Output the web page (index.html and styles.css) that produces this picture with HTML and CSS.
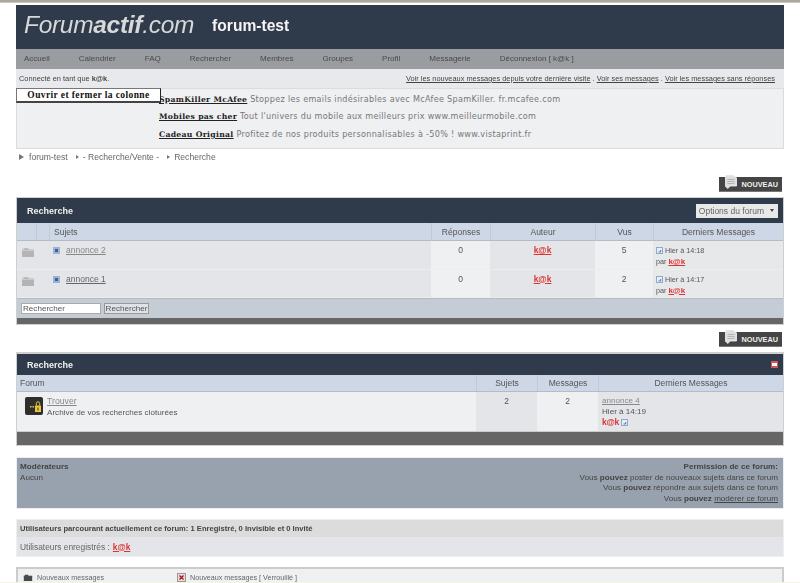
FILE: index.html
```html
<!DOCTYPE html>
<html lang="fr">
<head>
<meta charset="utf-8">
<title>forum-test</title>
<link rel="stylesheet" href="styles.css">
</head>
<body>
<svg class="defs" width="0" height="0">
  <symbol id="folder" viewBox="0 0 12 10"><path d="M0 2.500h1.500V1.200h5V2.500H12V10H0z" fill="#b4b4b4"/><path d="M0 3.500h12" stroke="#d0d0d0" stroke-width=".8"/></symbol>
  <symbol id="note" viewBox="0 0 7 7"><rect x=".5" y=".5" width="6" height="6" fill="#e6eef8" stroke="#8fa8cc"/><path d="M2.500 5h2.200V3" fill="none" stroke="#5a76a0"/></symbol>
  <symbol id="page" viewBox="0 0 12 14"><path d="M.5 0h8l3 3v8H5l-2 2.500-2.500-2z" fill="#dedede" stroke="#f4f4f4" stroke-width=".8"/><path d="M2.500 4.500h7M2.500 6.500h7M2.500 8.500h7" stroke="#b4b4b4"/></symbol>
</svg>
<div class="strip"></div>
<div class="page">
  <header class="banner">
    <span class="logo">Forum<b>actif</b>.com</span>
    <span class="sitename">forum-test</span>
  </header>
  <nav class="nav">
    <a>Accueil</a><a>Calendrier</a><a>FAQ</a><a>Rechercher</a><a>Membres</a><a>Groupes</a><a>Profil</a><a>Messagerie</a><a>Déconnexion [ k@k ]</a>
  </nav>
  <div class="infobar">
    <span>Connecté en tant que <b>k@k</b>.</span>
    <span class="infolinks"><a>Voir les nouveaux messages depuis votre dernière visite</a> . <a>Voir ses messages</a> . <a>Voir les messages sans réponses</a></span>
  </div>
  <div class="ads">
    <button class="toggle">Ouvrir et fermer la colonne</button>
    <p><a>SpamKiller McAfee</a> Stoppez les emails indésirables avec McAfee SpamKiller. fr.mcafee.com</p>
    <p><a>Mobiles pas cher</a> Tout l'univers du mobile aux meilleurs prix www.meilleurmobile.com</p>
    <p><a>Cadeau Original</a> Profitez de nos produits personnalisables à -50% ! www.vistaprint.fr</p>
  </div>
  <div class="crumbs"><span class="tri big"></span>forum-test<span class="tri"></span>- Recherche/Vente -<span class="tri"></span>Recherche</div>

  <div class="newrow first"><span class="newbtn"><svg class="pageicon"><use href="#page"/></svg>NOUVEAU</span></div>

  <section class="box">
    <div class="boxhead tall"><h2>Recherche</h2><span class="options">Options du forum<i></i></span></div>
    <div class="row topics thead">
      <div class="c0"></div><div class="c1"></div><div>Sujets</div><div class="ctr">Réponses</div><div class="ctr">Auteur</div><div class="ctr">Vus</div><div class="ctr">Derniers Messages</div>
    </div>
    <div class="row topics trow">
      <div class="c0"><svg class="folder"><use href="#folder"/></svg></div><div class="c1"></div><div class="subject"><span class="bullet"></span><a class="tlink">annonce 2</a></div><div class="ctr light">0</div><div class="ctr"><a class="red">k@k</a></div><div class="ctr light">5</div>
      <div class="last"><svg class="note"><use href="#note"/></svg> Hier à 14:18<br>par <a class="red">k@k</a></div>
    </div>
    <div class="row topics trow">
      <div class="c0"><svg class="folder"><use href="#folder"/></svg></div><div class="c1"></div><div class="subject"><span class="bullet"></span><a class="tlink dark">annonce 1</a></div><div class="ctr light">0</div><div class="ctr"><a class="red">k@k</a></div><div class="ctr light">2</div>
      <div class="last"><svg class="note"><use href="#note"/></svg> Hier à 14:17<br>par <a class="red">k@k</a></div>
    </div>
    <div class="searchrow"><input class="sinput" value="Rechercher"><button class="sbtn">Rechercher</button></div>
    <div class="foot thin"></div>
  </section>

  <div class="newrow"><span class="newbtn"><svg class="pageicon"><use href="#page"/></svg>NOUVEAU</span></div>

  <section class="box second">
    <div class="boxhead"><h2>Recherche</h2><span class="minus"></span></div>
    <div class="row forums thead">
      <div class="fname">Forum</div><div class="ctr">Sujets</div><div class="ctr">Messages</div><div class="ctr">Derniers Messages</div>
    </div>
    <div class="row forums frow">
      <div class="fmain">
        <svg class="lock" viewBox="0 0 18 18"><rect width="18" height="18" rx="2" fill="#2e2e2c"/><path d="M5 9h1.500v1.500H5zM7.500 9H9v1.500H7.500z" fill="#e8c840"/><rect x="10" y="8.500" width="6" height="6.500" rx=".5" fill="#e8c840"/><path d="M11.300 8.500V6.500a1.700 1.700 0 0 1 3.400 0v2" fill="none" stroke="#e8c840"/><rect x="12.500" y="10.500" width="1" height="3" fill="#2e2e2c"/></svg>
        <div><a class="tlink">Trouver</a><br>Archive de vos recherches cloturées</div>
      </div>
      <div class="ctr shade">2</div><div class="ctr">2</div>
      <div class="flast"><a class="tlink">annonce 4</a><br>Hier à 14:19<br><a class="red plain">k@k</a> <svg class="note"><use href="#note"/></svg></div>
    </div>
    <div class="foot wide"></div>
  </section>

  <section class="mods">
    <div><b>Modérateurs</b><br>Aucun</div>
    <div class="perms"><b>Permission de ce forum:</b><br>Vous <b>pouvez</b> poster de nouveaux sujets dans ce forum<br>Vous <b>pouvez</b> répondre aux sujets dans ce forum<br>Vous <b>pouvez</b> <a>modérer ce forum</a></div>
  </section>

  <section class="online">
    <div class="onhead">Utilisateurs parcourant actuellement ce forum: 1 Enregistré, 0 Invisible et 0 Invité</div>
    <div class="onbody">Utilisateurs enregistrés : <a class="red">k@k</a></div>
  </section>

  <section class="legend">
    <span class="lg first"><svg class="lfolder"><use href="#folder"/></svg>Nouveaux messages</span>
    <span class="lg"><svg class="xbox" viewBox="0 0 9 9"><rect x=".5" y=".5" width="8" height="8" fill="#f0d8d8" stroke="#999"/><path d="M2.500 2.500l4 4m0-4l-4 4" stroke="#a01818" stroke-width="1.300"/></svg>Nouveaux messages [ Verrouillé ]</span>
  </section>
</div>
<div class="bottomstrip"></div>
</body>
</html>
```
FILE: styles.css
```css
* { box-sizing: border-box; }
html, body { margin: 0; padding: 0; height: 583px; overflow: hidden; background: #fff; }
body { font-family: "Liberation Sans", Arial, sans-serif; font-size: 9px; color: #555; position: relative; }
.defs { position: absolute; }
a { color: inherit; }
.strip { height: 3px; background: #aba79b; border-bottom: 1px solid #c9c7bf; }
.page { width: 768px; margin: 2px 0 0 16px; filter: blur(.3px); }

.banner { height: 44px; background: #2f3b4a; display: flex; align-items: center; padding: 0 8px 4px; }
.logo { font-size: 24.500px; font-style: italic; color: #d6d8da; letter-spacing: -.3px; }
.logo b { font-weight: bold; }
.sitename { margin-left: 18px; font-size: 15.600px; font-weight: bold; color: #f4f4f4; padding-top: 2px; }

.nav { height: 20px; background: #999ca1; display: flex; align-items: center; gap: 29px; padding: 0 8px 2px; color: #4a4a4a; font-size: 8px; }

.infobar { height: 19px; background: #e8e9ec; display: flex; justify-content: space-between; align-items: center; padding: 0 9px 0 3px; font-size: 7.400px; color: #444; }
.infolinks a { text-decoration: underline; }

.ads { position: relative; height: 61px; background: #eff0f2; border: 1px solid #dcdcdc; padding: 4px 0 0 142px; font-family: "DejaVu Sans", sans-serif; font-size: 8.100px; color: #777; }
.ads p { margin: 0 0 4px; line-height: 13.300px; letter-spacing: .3px; white-space: nowrap; }
.ads a { font-family: "DejaVu Serif", serif; font-weight: bold; color: #222; text-decoration: underline; font-size: 7.700px; }
.toggle { position: absolute; left: -1px; top: -1px; width: 145px; height: 15px; padding: 0 0 1px; background: #fff; border: 1px solid #222; border-width: 1px 1px 2px 1px; border-color: #777 #222 #444 #777; font-family: "Liberation Serif", serif; font-weight: bold; font-size: 9.500px; letter-spacing: .4px; color: #111; }

.crumbs { height: 16px; display: flex; align-items: center; padding: 0 0 0 3px; font-size: 8.600px; color: #666; }
.tri { width: 0; height: 0; border-left: 3px solid #777; border-top: 2px solid transparent; border-bottom: 2px solid transparent; margin: 0 4px 0 8px; }
.tri.big { border-left-width: 5px; border-top-width: 3px; border-bottom-width: 3px; margin: 0 5px 0 0; }

.newrow { height: 27px; display: flex; justify-content: flex-end; align-items: flex-end; padding-bottom: 5px; }
.newrow.first { height: 32px; }
.newbtn { position: relative; width: 63px; height: 15px; background: #454545; border-bottom: 1px solid #777; color: #f0f0f0; font-size: 7.300px; font-weight: bold; display: flex; align-items: center; justify-content: flex-end; padding-right: 4px; margin-right: 2px; }
.pageicon { position: absolute; left: 6px; top: -2px; width: 12px; height: 14px; }

.box { border: 1px solid #cfcfcf; background: #e4e5e9; }
.box.second { border-top-width: 2px; }
.boxhead { height: 21px; background: #2f3b4a; display: flex; justify-content: space-between; align-items: center; padding: 0 5px 0 10px; color: #f0f0f0; }
.boxhead.tall { height: 25px; }
h2 { margin: 0; font-size: 9px; font-weight: bold; }
.options { width: 82px; height: 14px; background: #e8e8e8; color: #666; font-size: 8.500px; display: flex; align-items: center; justify-content: flex-end; padding-right: 4px; }
.options i { width: 0; height: 0; margin-left: 6px; border: 2.500px solid transparent; border-top: 3px solid #444; border-bottom: 0; }
.minus { width: 7px; height: 7px; background: #fff; border: solid #d45555; border-width: 2px 1px; }

.row { display: grid; }
.topics { grid-template-columns: 19px 13px 382px 59px 105px 58px 130px; }
.forums { grid-template-columns: 459px 61px 61px 185px; }
.thead { background: #cdd7e6; border-bottom: 1px solid #b4bcc8; color: #555; font-size: 8.500px; }
.topics.thead { height: 18px; }
.thead > div { display: flex; align-items: center; justify-content: center; border-left: 1px solid #bfc9da; }
.topics.thead > div:nth-child(3) { justify-content: flex-start; padding-left: 4px; }
.topics.thead > .c0 { border-left: 0; }
.forums.thead { height: 17px; }
.forums.thead > .fname { justify-content: flex-start; padding-left: 3px; border-left: 0; }

.trow { height: 28.500px; border-bottom: 1px solid #eceded; font-size: 8.500px; }
.trow > div { padding-top: 4px; }
.ctr { text-align: center; }
.light { background: #eff0f2; }
.c0 { padding-left: 5px; }
.folder { width: 12px; height: 10px; margin-top: 2px; display: block; }
.subject { display: flex; align-items: flex-start; gap: 6px; padding-left: 4px; }
.bullet { display: block; width: 7px; height: 7px; background: #3f5f98; border: 2px solid #9db2d4; margin-top: 2px; }
.tlink { text-decoration: underline; color: #888; }
.tlink.dark { color: #666; }
.subject .tlink { font-size: 8.500px; }
.red { color: #d33; font-weight: bold; text-decoration: underline; }
.red.plain { text-decoration: none; }
.last { padding-left: 3px; line-height: 11px; font-size: 7.200px; background: #e7e8ea; }
.last .red { font-size: 8px; }
.note { width: 7px; height: 7px; vertical-align: -1px; }

.searchrow { height: 20px; background: #c4ccd6; border-top: 1px solid #b3bac4; display: flex; align-items: center; gap: 3px; padding: 0 0 0 4px; }
.sinput { width: 80px; height: 11px; border: 1px solid #aaa; background: #fff; padding: 0 1px; font: 8.100px "Liberation Sans", sans-serif; color: #555; }
.sbtn { height: 11px; width: 45px; padding: 0; border: 1px solid #999; background: #dfe2e6; font: 8.100px "Liberation Sans", sans-serif; color: #555; line-height: 9px; }
.foot { background: #666; }
.foot.thin { height: 6px; }
.foot.wide { height: 14px; border-top: 1px solid #ccc; }

.frow { height: 39px; background: #eff0f2; font-size: 8.500px; }
.fmain { display: flex; gap: 4px; padding: 4px 0 0 8px; line-height: 10.500px; font-size: 8.100px; }
.fmain .tlink { font-size: 8.700px; }
.lock { width: 18px; height: 18px; margin-top: 1px; flex: none; }
.frow .ctr { padding-top: 4px; }
.shade { background: #e4e5e9; }
.flast { background: #e4e5e9; padding: 4px 0 0 4px; line-height: 10.500px; font-size: 8.100px; }
.flast .red { font-size: 8.500px; letter-spacing: -.2px; }

.mods { margin-top: 11px; height: 52px; background: #98a2ae; border: 1px solid #eeeff0; display: flex; justify-content: space-between; padding: 4px 5px 0 3px; line-height: 10.500px; color: #444; font-size: 8.100px; }
.perms { text-align: right; }
.perms a { text-decoration: underline; }

.online { margin-top: 10px; border: 1px solid #eeeff0; height: 38px; }
.onhead { height: 17px; background: #dcdcdc; padding: 0 0 0 3px; font-size: 7.600px; font-weight: bold; color: #444; display: flex; align-items: center; }
.onbody { height: 19px; background: #e4e5e9; padding: 0 0 0 3px; font-size: 8.400px; display: flex; align-items: center; gap: 3px; color: #666; }

.legend { margin-top: 10px; height: 16px; background: #eff0f2; border: 2px solid #ccc; border-bottom: 0; display: flex; padding: 3px 0 0 4px; font-size: 7.200px; color: #666; }
.lg { display: flex; align-items: center; height: 10px; gap: 3px; }
.lg.first { width: 155px; }
.lfolder { width: 12px; height: 7px; }
.first .lfolder { filter: brightness(.4); }
.xbox { width: 9px; height: 9px; margin-right: 1px; }

.bottomstrip { position: absolute; left: 0; right: 0; bottom: 0; height: 1px; background: #f3f3e6; }
```
